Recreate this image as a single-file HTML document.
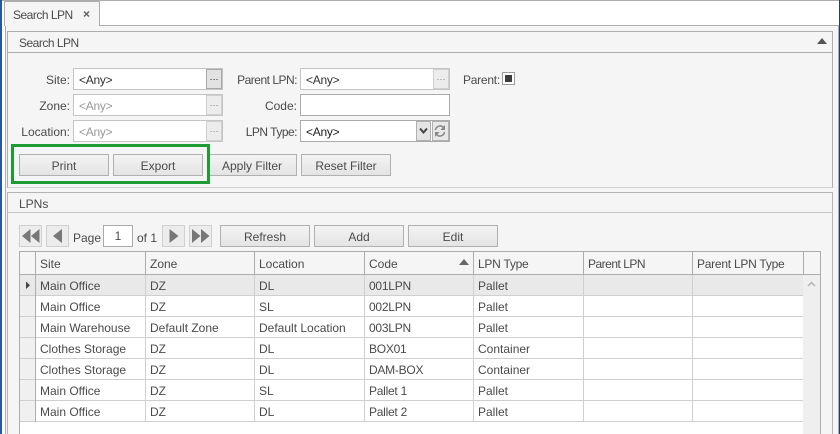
<!DOCTYPE html>
<html><head><meta charset="utf-8"><style>
html,body{margin:0;padding:0;width:840px;height:434px;overflow:hidden;background:#f5f5f5}
*{box-sizing:border-box}
body{font:12px/16px "Liberation Sans",sans-serif;color:#4a4a4a;position:relative}
.a{position:absolute}
.t{position:absolute;white-space:nowrap;line-height:16px}
.r{text-align:right}
.u{letter-spacing:-.5px}
.s{letter-spacing:-.25px}
.in{position:absolute;height:22px;background:#fff;border:1px solid #c4c4c4}
.in2{border-color:#aaa}
.dots{position:absolute;width:16px;height:20px;right:0;top:0;background:#ececec;border:1px solid #d0d0d0}
.dots:after{content:"";position:absolute;left:3px;top:9px;width:2px;height:1px;background:#bbb;box-shadow:3px 0 #bbb,6px 0 #bbb}
.dk{background:#e2e2e2;border-color:#a8a8a8}
.dk:after{background:#8a8a8a;box-shadow:3px 0 #8a8a8a,6px 0 #8a8a8a}
.btn{position:absolute;height:22px;width:90px;border:1px solid #b0b0b0;background:linear-gradient(#f3f3f3,#e4e4e4);text-align:center;line-height:22px;color:#4a4a4a}
.pg{position:absolute;top:225px;width:23px;height:22px;background:#ececec;border:1px solid #d0d0d0}
.h{position:absolute;background:#cfcfcf;height:1px}
.v{position:absolute;background:#cfcfcf;width:1px}
.g{background:#adadad}
</style></head><body>
<!-- top white strip -->
<div class="a" style="left:0;top:0;width:840px;height:25px;background:#fff"></div>
<div class="a g" style="left:0;top:0;width:840px;height:1px"></div>
<div class="a" style="left:0;top:0;width:2px;height:434px;background:#2b579a"></div>
<div class="a" style="left:839px;top:0;width:1px;height:434px;background:#1f3f73"></div>
<div class="a g" style="left:838px;top:25px;width:1px;height:409px"></div>
<div class="a" style="left:2px;top:25px;width:3px;height:409px;background:#fff"></div>
<div class="a g" style="left:5px;top:25px;width:1px;height:409px"></div>
<div class="a g" style="left:5px;top:25px;width:834px;height:1px"></div>
<!-- tab -->
<div class="a" style="left:4px;top:1px;width:96px;height:25px;background:#f5f5f5;border:1px solid #adadad;border-bottom:0"></div>
<div class="t u" style="left:13px;top:7px">Search LPN</div>
<svg class="a" style="left:83px;top:10px" width="8" height="8"><path d="M1 1.500L6 6.500M6 1.500L1 6.500" stroke="#666" stroke-width="1.500"/></svg>
<!-- panel 1 -->
<div class="a" style="left:7px;top:31px;width:826px;height:157px;border:1px solid #adadad;border-bottom-color:#cfcfcf"></div>
<div class="a g" style="left:7px;top:52px;width:826px;height:1px"></div>
<div class="t u" style="left:19px;top:35px">Search LPN</div>
<svg class="a" style="left:817px;top:38px" width="11" height="7"><path d="M5 0L10 6H0Z" fill="#555"/></svg>
<!-- labels -->
<div class="t r" style="left:10px;width:60px;top:72px">Site:</div>
<div class="t r" style="left:10px;width:60px;top:98px">Zone:</div>
<div class="t r" style="left:10px;width:60px;top:124px">Location:</div>
<div class="t r u" style="left:220px;width:77px;top:72px">Parent LPN:</div>
<div class="t r" style="left:220px;width:77px;top:98px">Code:</div>
<div class="t r u" style="left:220px;width:77px;top:124px">LPN Type:</div>
<div class="t s" style="left:463px;top:72px">Parent:</div>
<!-- inputs -->
<div class="in" style="left:73px;top:68px;width:150px"><div class="t s" style="left:5px;top:3px;color:#333">&lt;Any&gt;</div><div class="dots dk"></div></div>
<div class="in" style="left:73px;top:94px;width:150px"><div class="t s" style="left:5px;top:3px;color:#999">&lt;Any&gt;</div><div class="dots"></div></div>
<div class="in" style="left:73px;top:120px;width:150px"><div class="t s" style="left:5px;top:3px;color:#999">&lt;Any&gt;</div><div class="dots"></div></div>
<div class="in" style="left:300px;top:68px;width:150px"><div class="t s" style="left:5px;top:3px;color:#333">&lt;Any&gt;</div><div class="dots"></div></div>
<div class="in in2" style="left:300px;top:94px;width:150px"></div>
<div class="in in2" style="left:300px;top:120px;width:150px"><div class="t s" style="left:5px;top:3px;color:#222">&lt;Any&gt;</div></div>
<div class="a" style="left:416px;top:121px;width:15px;height:20px;background:#e4e4e4;border:1px solid #b0b0b0"></div>
<svg class="a" style="left:419px;top:127px" width="10" height="8"><path d="M1 1.500L4.500 5.500L8 1.500" fill="none" stroke="#444" stroke-width="2"/></svg>
<div class="a" style="left:432px;top:121px;width:17px;height:20px;background:#e8e8e8;border:1px solid #b0b0b0"></div>
<svg class="a" style="left:433px;top:124px" width="14" height="14"><path d="M2.500 6A4.600 4.600 0 0 1 10.500 3.500M11.500 8A4.600 4.600 0 0 1 3.500 10.500" fill="none" stroke="#888" stroke-width="1.500"/><path d="M12 1V6H7.500Z M2 13V8H6.500Z" fill="#888"/></svg>
<div class="a" style="left:502px;top:72px;width:13px;height:13px;background:#fff;border:1px solid #9c9c9c"></div>
<div class="a" style="left:505px;top:75px;width:7px;height:7px;background:#3c3c3c"></div>
<!-- buttons -->
<div class="btn" style="left:19px;top:154px">Print</div>
<div class="btn" style="left:113px;top:154px">Export</div>
<div class="btn" style="left:207px;top:154px">Apply Filter</div>
<div class="btn" style="left:301px;top:154px">Reset Filter</div>
<!-- green highlight -->
<div class="a" style="left:11px;top:144px;width:199px;height:40px;border:3px solid #1e9c34"></div>
<!-- panel 2 -->
<div class="a" style="left:7px;top:192px;width:826px;height:243px;border:1px solid #b4b4b4"></div>
<div class="a" style="left:7px;top:212px;width:826px;height:1px;background:#c4c4c4"></div>
<div class="t" style="left:19px;top:196px">LPNs</div>
<!-- pager -->
<div class="pg" style="left:19px"></div>
<svg class="a" style="left:21px;top:228px" width="20" height="16"><path d="M9.500 1V15L1 8Z M18.500 1V15L10 8Z" fill="#777"/></svg>
<div class="pg" style="left:46px"></div>
<svg class="a" style="left:52px;top:228px" width="12" height="16"><path d="M10 1V15L1 8Z" fill="#777"/></svg>
<div class="t" style="left:73px;top:230px">Page</div>
<div class="a" style="left:103px;top:225px;width:30px;height:22px;background:#fff;border:1px solid #aaa;text-align:center;line-height:21px">1</div>
<div class="t" style="left:137px;top:230px">of 1</div>
<div class="pg" style="left:162px"></div>
<svg class="a" style="left:168px;top:228px" width="12" height="16"><path d="M1.500 1V15L10.500 8Z" fill="#777"/></svg>
<div class="pg" style="left:189px"></div>
<svg class="a" style="left:191px;top:228px" width="20" height="16"><path d="M1 1V15L9.500 8Z M10 1V15L18.500 8Z" fill="#777"/></svg>
<div class="btn" style="left:220px;top:225px">Refresh</div>
<div class="btn" style="left:314px;top:225px">Add</div>
<div class="btn" style="left:408px;top:225px">Edit</div>
<!-- grid -->
<div class="a" style="left:19px;top:251px;width:802px;height:184px;background:#fff;border:1px solid #adadad;border-bottom:0"></div>
<div class="a" style="left:20px;top:252px;width:800px;height:23px;background:#f5f5f5"></div>
<div class="a g" style="left:19px;top:274px;width:801px;height:1px"></div>
<div class="a g" style="left:35px;top:251px;width:1px;height:24px"></div>
<div class="a g" style="left:145px;top:251px;width:1px;height:24px"></div>
<div class="a g" style="left:254px;top:251px;width:1px;height:24px"></div>
<div class="a g" style="left:364px;top:251px;width:1px;height:24px"></div>
<div class="a g" style="left:473px;top:251px;width:1px;height:24px"></div>
<div class="a g" style="left:583px;top:251px;width:1px;height:24px"></div>
<div class="a g" style="left:692px;top:251px;width:1px;height:24px"></div>
<div class="a g" style="left:803px;top:251px;width:1px;height:24px"></div>
<div class="t" style="left:40px;top:256px">Site</div>
<div class="t" style="left:150px;top:256px">Zone</div>
<div class="t" style="left:259px;top:256px">Location</div>
<div class="t" style="left:369px;top:256px">Code</div>
<svg class="a" style="left:459px;top:259px" width="11" height="7"><path d="M5 0L10 6H0Z" fill="#666"/></svg>
<div class="t s" style="left:478px;top:256px">LPN Type</div>
<div class="t u" style="left:588px;top:256px">Parent LPN</div>
<div class="t s" style="left:697px;top:256px">Parent LPN Type</div>
<!-- row header + selected row -->
<div class="a" style="left:20px;top:275px;width:15px;height:147px;background:#f0f0f0"></div>
<div class="a" style="left:20px;top:275px;width:783px;height:21px;background:#e9e9e9"></div>
<svg class="a" style="left:25px;top:281px" width="6" height="9"><path d="M1 0.500V8L5 4.200Z" fill="#444"/></svg>
<div class="a" style="left:803px;top:275px;width:17px;height:159px;background:#efefef"></div>
<svg class="a" style="left:807px;top:281px" width="9" height="7"><path d="M1 5L4.500 1.500L8 5" fill="none" stroke="#bbb" stroke-width="1.800"/></svg>
<!-- grid lines -->
<div class="h" style="left:20px;top:295px;width:783px"></div>
<div class="h" style="left:20px;top:316px;width:783px"></div>
<div class="h" style="left:20px;top:337px;width:783px"></div>
<div class="h" style="left:20px;top:358px;width:783px"></div>
<div class="h" style="left:20px;top:379px;width:783px"></div>
<div class="h" style="left:20px;top:400px;width:783px"></div>
<div class="h" style="left:20px;top:421px;width:783px"></div>
<div class="a g" style="left:35px;top:275px;width:1px;height:147px"></div>
<div class="v" style="left:145px;top:275px;height:147px"></div>
<div class="v" style="left:254px;top:275px;height:147px"></div>
<div class="v" style="left:364px;top:275px;height:147px"></div>
<div class="v" style="left:473px;top:275px;height:147px"></div>
<div class="v" style="left:583px;top:275px;height:147px"></div>
<div class="v" style="left:692px;top:275px;height:147px"></div>
<!-- rows -->
<div class="t" style="left:40px;top:278px">Main Office</div><div class="t" style="left:150px;top:278px">DZ</div><div class="t" style="left:259px;top:278px">DL</div><div class="t s" style="left:369px;top:278px">001LPN</div><div class="t" style="left:478px;top:278px">Pallet</div>
<div class="t" style="left:40px;top:299px">Main Office</div><div class="t" style="left:150px;top:299px">DZ</div><div class="t" style="left:259px;top:299px">SL</div><div class="t s" style="left:369px;top:299px">002LPN</div><div class="t" style="left:478px;top:299px">Pallet</div>
<div class="t" style="left:40px;top:320px">Main Warehouse</div><div class="t" style="left:150px;top:320px">Default Zone</div><div class="t" style="left:259px;top:320px">Default Location</div><div class="t s" style="left:369px;top:320px">003LPN</div><div class="t" style="left:478px;top:320px">Pallet</div>
<div class="t" style="left:40px;top:341px">Clothes Storage</div><div class="t" style="left:150px;top:341px">DZ</div><div class="t" style="left:259px;top:341px">DL</div><div class="t s" style="left:369px;top:341px">BOX01</div><div class="t" style="left:478px;top:341px">Container</div>
<div class="t" style="left:40px;top:362px">Clothes Storage</div><div class="t" style="left:150px;top:362px">DZ</div><div class="t" style="left:259px;top:362px">DL</div><div class="t s" style="left:369px;top:362px">DAM-BOX</div><div class="t" style="left:478px;top:362px">Container</div>
<div class="t" style="left:40px;top:383px">Main Office</div><div class="t" style="left:150px;top:383px">DZ</div><div class="t" style="left:259px;top:383px">SL</div><div class="t s" style="left:369px;top:383px">Pallet 1</div><div class="t" style="left:478px;top:383px">Pallet</div>
<div class="t" style="left:40px;top:404px">Main Office</div><div class="t" style="left:150px;top:404px">DZ</div><div class="t" style="left:259px;top:404px">DL</div><div class="t s" style="left:369px;top:404px">Pallet 2</div><div class="t" style="left:478px;top:404px">Pallet</div>
</body></html>
